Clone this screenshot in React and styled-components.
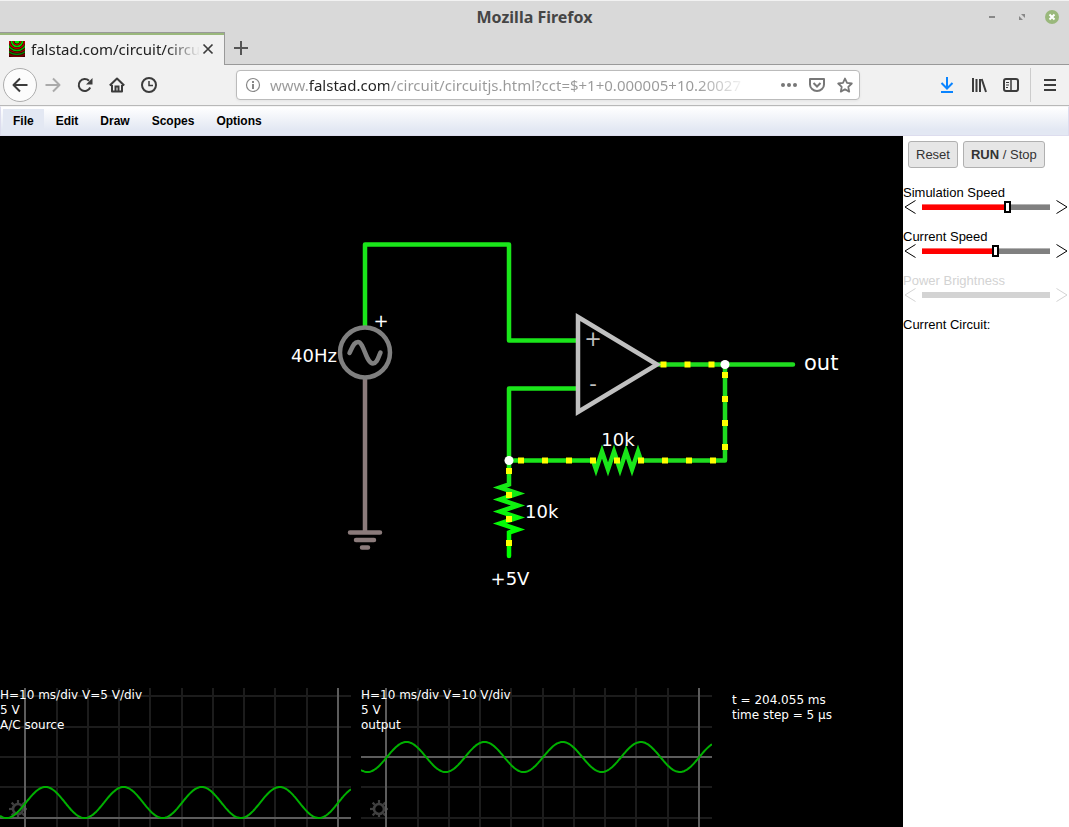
import React, { useState } from "react";
import styled, { createGlobalStyle } from "styled-components";

const GlobalStyle = createGlobalStyle`
  * { box-sizing: border-box; }
  html, body { margin: 0; padding: 0; }
  body { background: #fff; color: #000; font-family: "Liberation Sans", sans-serif; }
  button { font: inherit; color: inherit; margin: 0; }
  svg { display: block; flex: none; }
`;

const Window = styled.div`
  display: flex;
  flex-direction: column;
  min-height: 100vh;
`;

/* ---------- window chrome ---------- */

const TitleBar = styled.header`
  display: grid;
  grid-template-columns: 1fr auto 1fr;
  align-items: center;
  height: 32px;
  background: #d9d9d9;
  border-top: 1px solid #f2f2f2;
`;

const Title = styled.h1`
  grid-column: 2;
  margin: 0;
  font: bold 16px/22px "Noto Sans", sans-serif;
  color: #454545;
`;

const WindowControls = styled.div`
  display: flex;
  justify-content: flex-end;
  gap: 14px;
  padding-right: 9px;
`;

const PlainButton = styled.button`
  display: flex;
  align-items: center;
  justify-content: center;
  width: ${(p) => p.$size}px;
  height: ${(p) => p.$size}px;
  padding: 0;
  border: 0;
  background: none;
  color: ${(p) => p.$color || "#3c3c3c"};
`;

const TabStrip = styled.div`
  display: flex;
  height: 33px;
  background: #d9d9d9;
`;

const Tab = styled.div`
  display: flex;
  align-items: center;
  width: 225px;
  padding: 0 9px;
  background: #f1f1f1;
  border-top: 1px solid #999;
  border-right: 1px solid #999;
  box-shadow: inset 0 2px #9ab87c;
`;

const TabLabel = styled.span`
  flex: 1;
  margin-left: 6px;
  white-space: nowrap;
  font: 15px/20px "Noto Sans", sans-serif;
  color: #222;
  mask-image: linear-gradient(to right, #000 80%, transparent);
`;

const TabStripRest = styled.div`
  flex: 1;
  display: flex;
  border-bottom: 1px solid #999;
`;

const NavBar = styled.nav`
  display: flex;
  align-items: center;
  height: 41px;
  padding: 0 3px;
  background: #f1f1f1;
  border-bottom: 1px solid #b8b8b8;
`;

const BackButton = styled(PlainButton)`
  width: 34px;
  height: 34px;
  background: #fcfcfc;
  border: 1px solid #adadad;
  border-radius: 50%;
`;

const UrlBox = styled.div`
  display: flex;
  align-items: center;
  flex: 1;
  min-width: 200px;
  height: 30px;
  margin: 0 71px;
  padding: 0 0 0 8px;
  background: #fff;
  border: 1px solid #bbb;
  border-radius: 4px;
  box-shadow: 0 1px 3px rgba(0, 0, 0, 0.06);
`;

const UrlInput = styled.input`
  flex: 1;
  min-width: 0;
  height: 28px;
  margin: 0 28px 0 9px;
  padding: 0;
  border: 0;
  outline: 0;
  font: 15px/28px "Noto Sans", sans-serif;
  color: transparent;
  background: linear-gradient(
    to right,
    #999 39px,
    #222 39px 119px,
    #999 119px calc(100% - 50px),
    transparent
  );
  background-clip: text;
  -webkit-background-clip: text;
`;

const Divider = styled.span`
  width: 1px;
  height: 34px;
  margin: 0 3px;
  background: #ccc;
`;

/* ---------- page ---------- */

const MenuBar = styled.div`
  display: flex;
  align-items: stretch;
  gap: 2px;
  height: 30px;
  padding: 2px 2px 0;
  border: 1px solid #dde;
  border-top-color: #f4f4f4;
  background: linear-gradient(#fff, #e3e8f3 80%);
`;

const MenuItem = styled.button`
  padding: 0 10px 2px;
  border: 0;
  background: ${(p) => (p.$selected ? "#e3e8f3" : "none")};
  font: bold 12px/16px "Liberation Sans", sans-serif;
`;

const Main = styled.main`
  flex: 1;
  display: flex;
`;

const Simulation = styled.section`
  flex: 1;
  min-width: 0;
  display: flex;
  flex-direction: column;
  background: #000;
  color: #fff;
  font: 12px/15px "DejaVu Sans", sans-serif;
`;

const Circuit = styled.svg`
  flex: 1;
  width: 100%;
  min-height: 0;
`;

const Scopes = styled.div`
  display: grid;
  grid-template-columns: 351px 351px 1fr;
  gap: 10px;
  height: 139px;
  overflow: hidden;
`;

const Scope = styled.figure`
  display: grid;
  margin: 0;
  > * { grid-area: 1 / 1; }
`;

const ScopeText = styled.figcaption`
  z-index: 1;
  white-space: pre-line;
`;

const Readout = styled.p`
  margin: 5px 0 0 10px;
  white-space: pre-line;
`;

const Sidebar = styled.aside`
  width: 166px;
  font-size: 13px;
  line-height: 15px;
`;

const ButtonRow = styled.div`
  display: flex;
  gap: 5px;
  padding: 5px 5px 17px;
`;

const PushButton = styled.button`
  height: 27px;
  padding: 0 7px;
  border: 1px solid #b0b0b0;
  border-radius: 3px;
  background: #e6e6e6;
  color: #333;
  white-space: nowrap;
`;

const Control = styled.div`
  height: 44px;
  color: ${(p) => (p.$off ? "#d3d3d3" : "#000")};
`;

const ControlLabel = styled.label`
  display: block;
`;

const SliderRow = styled.div`
  display: flex;
  align-items: center;
  justify-content: space-between;
  height: 14px;
  padding: 0 1px;
`;

const Slider = styled.input`
  appearance: none;
  flex: 1;
  min-width: 0;
  height: 6px;
  margin: 0 6px;
  background: ${(p) =>
    p.disabled
      ? "#d3d3d3"
      : `linear-gradient(rgba(255, 255, 255, 0.4) 1px, transparent 1px),
         linear-gradient(to right, #f00 ${p.value}%, #808080 ${p.value}%)`};
  &::-webkit-slider-thumb {
    appearance: none;
    width: 7px;
    height: 12px;
    border: 2px solid #000;
    background: #fff;
    visibility: ${(p) => (p.disabled ? "hidden" : "visible")};
  }
`;

const CircuitName = styled.p`
  margin: 0;
`;

/* ---------- icons ---------- */

function Icon({ size = 16, width = 2, children }) {
  return (
    <svg
      width={size}
      height={size}
      viewBox={`0 0 ${size} ${size}`}
      fill="none"
      stroke="currentColor"
      strokeWidth={width}
      aria-hidden="true"
    >
      {children}
    </svg>
  );
}

const Favicon = () => (
  <svg width="16" height="16" viewBox="0 0 16 16" fill="none" aria-hidden="true">
    <rect width="16" height="16" fill="#300" />
    <circle cx="8" cy="0" r="2.500" fill="#0e0" />
    <circle cx="8" cy="0" r="3.800" stroke="#c00" strokeWidth="1.200" />
    <circle cx="8" cy="0" r="5.500" stroke="#0d0" strokeWidth="1.600" />
    <circle cx="8" cy="0" r="7.500" stroke="#b00" strokeWidth="1.400" />
    <circle cx="8" cy="0" r="9.500" stroke="#0b0" strokeWidth="1.600" />
    <circle cx="8" cy="0" r="11.500" stroke="#900" strokeWidth="1.400" />
    <circle cx="8" cy="0" r="13.500" stroke="#080" strokeWidth="1.500" />
    <circle cx="8" cy="0" r="15.500" stroke="#700" strokeWidth="1.400" />
  </svg>
);

function Chevron({ left }) {
  return (
    <svg width="12" height="14" viewBox="0 0 12 14" fill="none" stroke="currentColor" aria-hidden="true">
      <path d={left ? "M11.5 .5 1 7l10.5 6.5" : "M.5 .5 11 7 .5 13.5"} />
    </svg>
  );
}

const ArrowButton = styled.button`
  display: flex;
  padding: 0;
  border: 0;
  background: none;
`;

/* ---------- circuit drawing ---------- */

const GREEN = "#1ae61a";
const DARK_GREEN = "#1fdc1f";

const chargeDots = [
  ...[663.5, 687.5, 711.5].map((x) => [x, 364.5]),
  ...[375, 399, 423, 447].map((y) => [725, y]),
  ...[521, 545, 569, 593, 617, 641, 665, 689, 713].map((x) => [x, 460.5]),
  ...[471, 495, 519, 543].map((y) => [509, y]),
];

function CircuitDrawing() {
  return (
    <Circuit viewBox="0 136 903 552" role="img" aria-label="Op-amp circuit">
      <defs>
        <linearGradient id="rail" gradientUnits="userSpaceOnUse" x1="0" y1="480" x2="0" y2="535">
          <stop offset="0" stopColor={GREEN} />
          <stop offset="1" stopColor="#00ff00" />
        </linearGradient>
      </defs>
      <g fill="none" strokeWidth="4.5" strokeLinecap="round">
        <path stroke={GREEN} strokeLinejoin="round" d="M365 326V244.500H509V340.500H577M577 388.500H509V460.500" />
        <path stroke={DARK_GREEN} strokeLinejoin="round" d="M659 364.500H793M725 364.500V460.500H641" />
        <path stroke={GREEN} d="M509 460.500H593" />
        <path
          stroke={GREEN}
          d="M593 460.500 596 469.500 602 451.500 608 469.500 614 451.500 620 469.500 626 451.500 632 469.500 638 451.500 641 460.500"
        />
        <path
          stroke="url(#rail)"
          d="M509 460.500 509.010 484.500 500 487.500 518 493.500 500 499.500 518 505.500 500 511.500 518 517.500 500 523.500 518 529.500 509 532.500V556"
        />
        <path stroke="#8b7b7b" d="M365 379V532.500M350 532.500H380M356 540H374M362 547.500H368" />
        <circle stroke="#808080" cx="365" cy="352.500" r="25" />
        <path
          stroke="#808080"
          d="M349.500 353C353 346 354 342 358 342C364 342 366 363.500 373 363.500C377 363.500 378 358 380.500 352.500"
        />
        <path stroke="#c0c0c0" strokeLinecap="butt" d="M578 317 657 364.500 578 412Z" />
      </g>
      <g fill="#ff0">
        {chargeDots.map(([x, y]) => (
          <rect key={`${x}-${y}`} x={x - 3} y={y - 3} width="6" height="6" />
        ))}
      </g>
      <g fill="#fff">
        <circle cx="725" cy="364.500" r="4.500" />
        <circle cx="509" cy="460.500" r="4.500" />
      </g>
      <g fill="#fff" fontFamily="'DejaVu Sans', sans-serif" fontSize="18">
        <text x="337" y="362" textAnchor="end">40Hz</text>
        <text x="381" y="327" textAnchor="middle">+</text>
        <text x="618" y="446" textAnchor="middle">10k</text>
        <text x="525" y="518">10k</text>
        <text x="510" y="585" textAnchor="middle">+5V</text>
        <text x="804" y="370" fontSize="21">out</text>
        <g fill="#c0c0c0" fontSize="21" textAnchor="middle">
          <text x="593" y="346">+</text>
          <text x="593" y="391">-</text>
        </g>
      </g>
    </Circuit>
  );
}

/* ---------- oscilloscope traces ---------- */

const columns = [25, 57, 88, 119, 150, 182, 213, 244, 275, 307, 338];
const rows = [8, 39, 69, 99, 130];

function trace(center, amplitude) {
  const points = [];
  for (let x = 0; x <= 351; x += 1) {
    const y = center - amplitude * Math.cos(((x - 45.500) * 2 * Math.PI) / 78.100);
    points.push(`${x},${y.toFixed(1)}`);
  }
  return points.join(" ");
}

function ScopeView({ text, zeroRow, center, amplitude }) {
  return (
    <Scope>
      <svg width="351" height="139" viewBox="0 0 351 139" fill="none" aria-hidden="true">
        <g stroke="#404040" transform="translate(18 121)">
          <circle r="5" strokeWidth="2.600" />
          {[0, 45, 90, 135, 180, 225, 270, 315].map((a) => (
            <path key={a} strokeWidth="2.200" d="M0-6V-9" transform={`rotate(${a})`} />
          ))}
        </g>
        <g strokeWidth="2">
          {columns.map((x) => (
            <path key={x} stroke="#1c1c1c" d={`M${x} 0V139`} />
          ))}
          {rows.map((y) => (
            <path key={y} stroke="#1c1c1c" d={`M0 ${y}H351`} />
          ))}
          <path stroke="#5c5c5c" d={`M25 0V139M338 0V139M0 ${zeroRow}H351`} />
        </g>
        <polyline points={trace(center, amplitude)} stroke="#00b000" strokeWidth="2" />
      </svg>
      <ScopeText>{text}</ScopeText>
    </Scope>
  );
}

/* ---------- side panel ---------- */

function SliderControl({ id, label, initial, disabled }) {
  const [value, setValue] = useState(initial);
  return (
    <Control $off={disabled}>
      <ControlLabel htmlFor={id}>{label}</ControlLabel>
      <SliderRow>
        <ArrowButton aria-label={`Decrease ${label}`} disabled={disabled} onClick={() => setValue(Math.max(0, value - 1))}>
          <Chevron left />
        </ArrowButton>
        <Slider
          id={id}
          type="range"
          min="0"
          max="100"
          value={value}
          disabled={disabled}
          onChange={(e) => setValue(Number(e.target.value))}
        />
        <ArrowButton aria-label={`Increase ${label}`} disabled={disabled} onClick={() => setValue(Math.min(100, value + 1))}>
          <Chevron />
        </ArrowButton>
      </SliderRow>
    </Control>
  );
}

export default function App() {
  const [url, setUrl] = useState(
    "www.falstad.com/circuit/circuitjs.html?cct=$+1+0.000005+10.20027"
  );
  return (
    <Window>
      <GlobalStyle />
      <TitleBar>
        <Title>Mozilla Firefox</Title>
        <WindowControls>
          <PlainButton $size={16} $color="#888" aria-label="Minimize">
            <Icon><path d="M5 8h6" /></Icon>
          </PlainButton>
          <PlainButton $size={16} $color="#888" aria-label="Maximize">
            <Icon>
              <path stroke="none" fill="currentColor" d="M7 5h4v4zM5 7v4h4z" />
            </Icon>
          </PlainButton>
          <PlainButton $size={16} aria-label="Close window">
            <Icon>
              <circle cx="8" cy="8" r="7" fill="#9ab87c" stroke="none" />
              <path stroke="#fff" d="m5.500 5.500 5 5m0-5-5 5" />
            </Icon>
          </PlainButton>
        </WindowControls>
      </TitleBar>

      <TabStrip>
        <Tab>
          <Favicon />
          <TabLabel>falstad.com/circuit/circu</TabLabel>
          <PlainButton $size={16} aria-label="Close tab">
            <Icon width={1.7}><path d="m3.500 3.500 9 9m0-9-9 9" /></Icon>
          </PlainButton>
        </Tab>
        <TabStripRest>
          <PlainButton $size={32} $color="#555" aria-label="New tab">
            <Icon><path d="M8 1v14M1 8h14" /></Icon>
          </PlainButton>
        </TabStripRest>
      </TabStrip>

      <NavBar>
        <BackButton $size={34} aria-label="Back">
          <Icon><path d="M15.500 8H1.500M8 1.500 1.500 8 8 14.500" strokeLinejoin="round" /></Icon>
        </BackButton>
        <PlainButton $size={32} $color="#aaa" aria-label="Forward">
          <Icon><path d="M.5 8H14.500M8 1.500 14.500 8 8 14.500" strokeLinejoin="round" /></Icon>
        </PlainButton>
        <PlainButton $size={32} aria-label="Reload">
          <Icon>
            <path d="M13.200 10.500A6 6 0 1 1 12 3.800" />
            <path d="M15.500 1v6.500H9z" fill="currentColor" stroke="none" />
          </Icon>
        </PlainButton>
        <PlainButton $size={32} aria-label="Home">
          <Icon>
            <path d="M.8 8.500 8 1.500l7.200 7M3 8v6.500h10V8" strokeLinejoin="round" />
            <path d="M6.500 14V9.500h3V14" />
          </Icon>
        </PlainButton>
        <PlainButton $size={32} aria-label="History">
          <Icon>
            <circle cx="8" cy="8" r="7" />
            <path d="M8 4v4.500h4" strokeWidth="1.500" />
          </Icon>
        </PlainButton>
        <UrlBox>
          <PlainButton $size={16} $color="#888" aria-label="Site information">
            <Icon width={1.2}>
              <circle cx="8" cy="8" r="6.500" />
              <path d="M8 7v5M8 4v2" strokeWidth="2" />
            </Icon>
          </PlainButton>
          <UrlInput aria-label="Address" value={url} onChange={(e) => setUrl(e.target.value)} spellCheck={false} />
          <PlainButton $size={28} $color="#777" aria-label="Page actions">
            <Icon>
              <g fill="currentColor" stroke="none">
                <circle cx="2" cy="8" r="2" />
                <circle cx="8" cy="8" r="2" />
                <circle cx="14" cy="8" r="2" />
              </g>
            </Icon>
          </PlainButton>
          <PlainButton $size={28} $color="#777" aria-label="Save to Pocket">
            <Icon>
              <path d="M1 2h14v5.500a7 6.500 0 0 1-14 0z" strokeLinejoin="round" />
              <path d="M4.500 6 8 9.500 11.500 6" />
            </Icon>
          </PlainButton>
          <PlainButton $size={28} $color="#777" aria-label="Bookmark">
            <Icon width={1.8}>
              <path
                d="m8 1.500 2 4.400 4.800.6-3.500 3.300.9 4.800L8 12.200l-4.200 2.400.9-4.800L1.200 6.500 6 5.900z"
                strokeLinejoin="round"
              />
            </Icon>
          </PlainButton>
        </UrlBox>
        <PlainButton $size={32} $color="#0a84ff" aria-label="Downloads">
          <Icon><path d="M8 0v11M2.500 6 8 11.500 13.500 6M2 15h12" /></Icon>
        </PlainButton>
        <PlainButton $size={32} aria-label="Library">
          <Icon><path d="M2 1v14M5.500 2v13M9 2v13M10.700 2 15 15" /></Icon>
        </PlainButton>
        <PlainButton $size={32} aria-label="Sidebars">
          <Icon>
            <rect x="1" y="2" width="14" height="12" rx="2" />
            <path d="M8 2v12" strokeWidth="1.500" />
            <path d="M3 5.500h3M3 8h3M3 10.500h2" strokeWidth="1" />
          </Icon>
        </PlainButton>
        <Divider />
        <PlainButton $size={32} aria-label="Open menu">
          <Icon><path d="M2 3h12M2 8h12M2 13h12" /></Icon>
        </PlainButton>
      </NavBar>

      <MenuBar role="menubar">
        {["File", "Edit", "Draw", "Scopes", "Options"].map((name) => (
          <MenuItem key={name} role="menuitem" $selected={name === "File"}>
            {name}
          </MenuItem>
        ))}
      </MenuBar>

      <Main>
        <Simulation>
          <CircuitDrawing />
          <Scopes>
            <ScopeView
              text={"H=10 ms/div V=5 V/div\n5 V\nA/C source"}
              zeroRow={130}
              center={114.5}
              amplitude={15.5}
            />
            <ScopeView
              text={"H=10 ms/div V=10 V/div\n5 V\noutput"}
              zeroRow={69}
              center={69}
              amplitude={15}
            />
            <Readout>{"t = 204.055 ms\ntime step = 5 μs"}</Readout>
          </Scopes>
        </Simulation>
        <Sidebar>
          <ButtonRow>
            <PushButton>Reset</PushButton>
            <PushButton>
              <b>RUN</b> / Stop
            </PushButton>
          </ButtonRow>
          <SliderControl id="simulation-speed" label="Simulation Speed" initial={68} />
          <SliderControl id="current-speed" label="Current Speed" initial={58} />
          <SliderControl id="power-brightness" label="Power Brightness" initial={50} disabled />
          <CircuitName>Current Circuit:</CircuitName>
        </Sidebar>
      </Main>
    </Window>
  );
}
